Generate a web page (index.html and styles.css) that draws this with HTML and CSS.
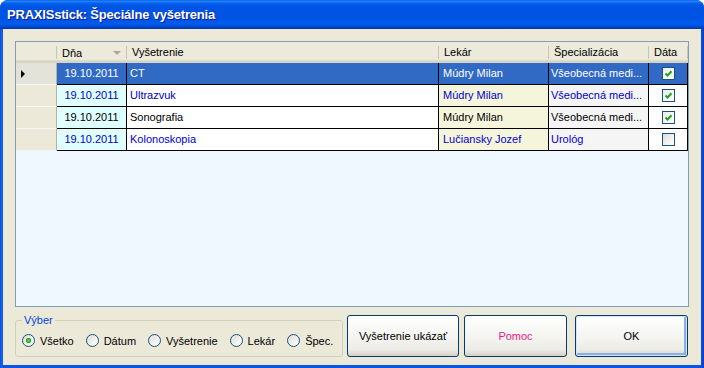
FILE: index.html
```html
<!DOCTYPE html>
<html lang="sk">
<head>
  <meta charset="UTF-8" />
  <title>PRAXISstick: Špeciálne vyšetrenia</title>
  <link rel="stylesheet" href="styles.css">
</head>
<body>
  <div class="window">
    <div class="titlebar">PRAXISstick: Špeciálne vyšetrenia</div>

    <div class="client">
      <div class="grid">
        <div class="row head">
          <div class="hc corner"></div>
          <div class="hc sorted">Dňa<span class="sort-arrow"></span></div>
          <div class="hc">Vyšetrenie</div>
          <div class="hc">Lekár</div>
          <div class="hc">Špecializácia</div>
          <div class="hc">Dáta</div>
        </div>

        <div class="row sel">
          <div class="rh current"><span class="pointer"></span></div>
          <div class="cell date">19.10.2011</div>
          <div class="cell exam">CT</div>
          <div class="cell doctor">Múdry Milan</div>
          <div class="cell spec">Všeobecná medi...</div>
          <div class="cell data"><span class="chk on"><svg width="11" height="11" viewBox="0 0 11 11"><path d="M2.5 5.5 L4.5 7.5 L8.5 3.2" /></svg></span></div>
        </div>

        <div class="row blue">
          <div class="rh"></div>
          <div class="cell date">19.10.2011</div>
          <div class="cell exam">Ultrazvuk</div>
          <div class="cell doctor">Múdry Milan</div>
          <div class="cell spec">Všeobecná medi...</div>
          <div class="cell data"><span class="chk on"><svg width="11" height="11" viewBox="0 0 11 11"><path d="M2.5 5.5 L4.5 7.5 L8.5 3.2" /></svg></span></div>
        </div>

        <div class="row">
          <div class="rh"></div>
          <div class="cell date">19.10.2011</div>
          <div class="cell exam">Sonografia</div>
          <div class="cell doctor">Múdry Milan</div>
          <div class="cell spec">Všeobecná medi...</div>
          <div class="cell data"><span class="chk on"><svg width="11" height="11" viewBox="0 0 11 11"><path d="M2.5 5.5 L4.5 7.5 L8.5 3.2" /></svg></span></div>
        </div>

        <div class="row blue">
          <div class="rh"></div>
          <div class="cell date">19.10.2011</div>
          <div class="cell exam">Kolonoskopia</div>
          <div class="cell doctor">Lučiansky Jozef</div>
          <div class="cell spec">Urológ</div>
          <div class="cell data"><span class="chk"></span></div>
        </div>
      </div>

      <div class="bottom">
        <fieldset class="choice">
          <legend>Výber</legend>
          <div class="options">
            <label class="opt"><span class="radio on"></span>Všetko</label>
            <label class="opt"><span class="radio"></span>Dátum</label>
            <label class="opt"><span class="radio"></span>Vyšetrenie</label>
            <label class="opt"><span class="radio"></span>Lekár</label>
            <label class="opt"><span class="radio"></span>Špec.</label>
          </div>
        </fieldset>
        <button class="btn show">Vyšetrenie ukázať</button>
        <button class="btn help">Pomoc</button>
        <button class="btn ok">OK</button>
      </div>
    </div>
  </div>
</body>
</html>
```

FILE: styles.css
```css
* {
  box-sizing: border-box;
}
body {
  margin: 0;
  background: #fff;
  font-family: "Liberation Sans", Arial, sans-serif;
  font-size: 11px;
}
.window {
  width: 704px;
  height: 368px;
  display: flex;
  flex-direction: column;
  background: linear-gradient(to right, #0831D9 0, #166AEE 1px, #0A55E4 3px, #0A55E4 701px, #0A3FD0 703px);
  border-radius: 8px 8px 0 0;
  overflow: hidden;
}
.titlebar {
  flex: none;
  height: 29px;
  padding-left: 7px;
  display: flex;
  align-items: center;
  color: #fff;
  font-size: 13px;
  font-weight: bold;
  letter-spacing: -0.2px;
  text-shadow: 1px 1px #0A1C8F;
  background: linear-gradient(to bottom, #0058EE 0%, #2E86F8 4%, #1673F5 7%, #0463EE 11%, #0057E5 18%, #0054E3 26%, #0053E3 60%, #0057E8 72%, #005AEB 82%, #004FDA 90%, #0041BE 96%, #003399 100%);
}
.client {
  flex: 1;
  margin: 0 3px 3px;
  background: #ECE9D8;
  padding: 12px 12px 8px;
  display: flex;
  flex-direction: column;
  gap: 8px;
}

/* grid */
.grid {
  flex: 1;
  border: 1px solid #7F9DB9;
  background: #F0F8FF;
}
.row {
  display: grid;
  grid-template-columns: 41px 70px 312px 110px 100px 39px;
  height: 22px;
}
.row.head {
  height: 21px;
  background: linear-gradient(#EBEADB 0, #EBEADB 18px, #E2DECD 18px, #D6D2C2 20px);
}
.hc {
  padding-left: 5px;
  line-height: 20px;
  color: #000;
  background: linear-gradient(#C7C5B2, #C7C5B2) no-repeat right 0 top 4px / 1px 13px;
}
.hc.sorted {
  display: flex;
  align-items: center;
  justify-content: space-between;
  padding-right: 6px;
}
.sort-arrow {
  width: 0;
  height: 0;
  border-left: 4px solid transparent;
  border-right: 4px solid transparent;
  border-top: 4px solid #ACA899;
}
.rh {
  background: #ECE9D8;
  border-right: 1px solid #B5B3A6;
  border-bottom: 1px solid #F6F5EF;
  display: flex;
  align-items: center;
  padding-left: 5px;
}
.rh.current {
  background: #E4E3DA;
}
.pointer {
  width: 0;
  height: 0;
  border-top: 4px solid transparent;
  border-bottom: 4px solid transparent;
  border-left: 4px solid #000;
}
.cell {
  border-right: 1px solid #000;
  border-bottom: 1px solid #000;
  padding-left: 3px;
  line-height: 21px;
  white-space: nowrap;
  overflow: hidden;
  color: #000;
}
.date {
  background: #E0FFFF;
  text-align: center;
  padding-left: 0;
}
.exam {
  background: #fff;
}
.doctor {
  background: #F5F5DC;
  padding-left: 4px;
}
.spec {
  background: #F5F5F5;
  padding-left: 2px;
}
.data {
  background: #fff;
  display: flex;
  align-items: center;
  justify-content: center;
  padding-left: 0;
}
.row.blue .cell {
  color: #0000CC;
}
.row.sel .cell {
  background: #316AC5;
  color: #fff;
}
.chk {
  width: 13px;
  height: 13px;
  border: 1px solid #1C5180;
  background: linear-gradient(135deg, #DCDCD7, #F7F7F5 70%, #fff);
  display: flex;
  align-items: center;
  justify-content: center;
}
.chk.on {
  background: linear-gradient(135deg, #EDEDEA, #fff);
}
.chk svg path {
  fill: none;
  stroke: #21A121;
  stroke-width: 2;
}

/* bottom part */
.bottom {
  flex: none;
  height: 42px;
  display: flex;
}
.choice {
  width: 328px;
  height: 42px;
  margin: 0 4px 0 0;
  padding: 0 6px;
  border: 1px solid #D0D0BF;
  border-radius: 3px;
}
.choice legend {
  padding: 0 2px;
  color: #0046D5;
  line-height: 11px;
}
.options {
  display: flex;
  align-items: center;
  gap: 12px;
  height: 29px;
}
.opt {
  display: flex;
  align-items: center;
  gap: 5px;
  color: #000;
}
.radio {
  width: 13px;
  height: 13px;
  border-radius: 50%;
  border: 1px solid #1C5180;
  background: linear-gradient(135deg, #DCDCD7, #F4F4F0 65%, #fff);
}
.radio.on {
  background: radial-gradient(circle, #6DDA6D 0, #21A121 2.5px, transparent 3px), linear-gradient(135deg, #DCDCD7, #F4F4F0 65%, #fff);
}
.btn {
  height: 42px;
  padding: 0;
  border: 1px solid #003C74;
  border-radius: 3px;
  background: linear-gradient(#FFFFFF, #F4F4F0 55%, #ECEBE6 85%, #D6D0C5);
  font-family: "Liberation Sans", Arial, sans-serif;
  font-size: 11px;
  color: #000;
}
.btn.show {
  width: 112px;
  margin-right: 5px;
}
.btn.help {
  width: 103px;
  margin-right: 8px;
  color: #F0168C;
}
.btn.ok {
  width: 113px;
  box-shadow: inset 0 0 0 1px #CEE7FF, inset -2px -2px 0 1px #89ADE4;
}
```
